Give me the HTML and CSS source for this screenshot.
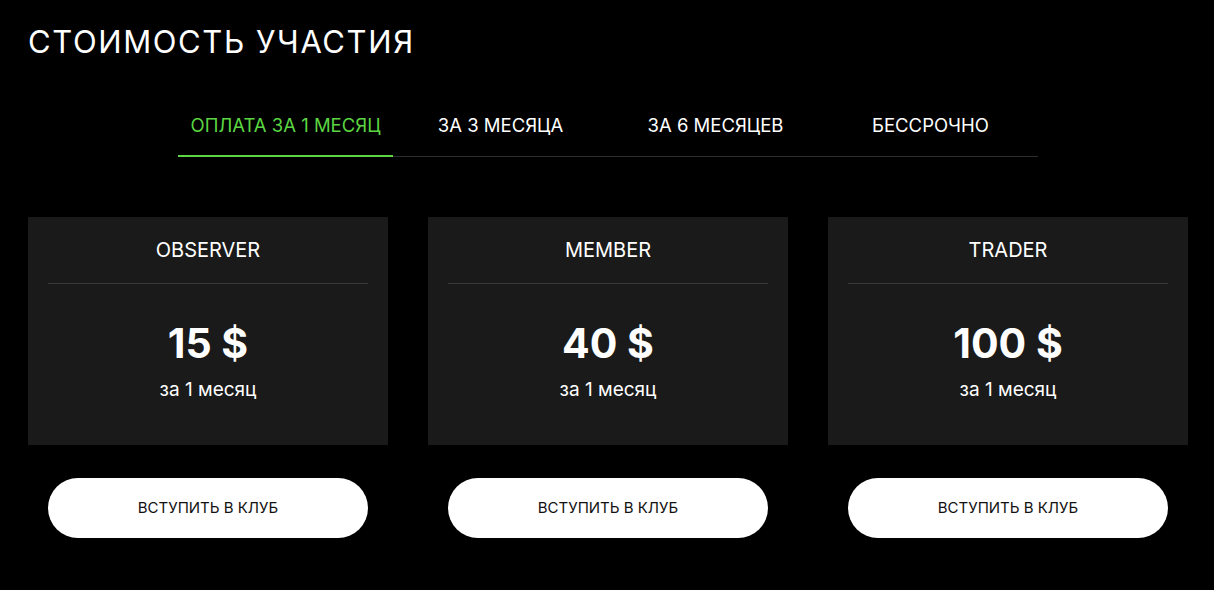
FILE: index.html
```html
<!DOCTYPE html>
<html lang="ru">
<head>
  <meta charset="UTF-8" />
  <meta name="viewport" content="width=device-width, initial-scale=1" />
  <title>Стоимость участия</title>
  <link rel="stylesheet" href="styles.css">
</head>
<body>

  <section class="pricing">
    <h1>Стоимость участия</h1>

    <div class="tabs">
      <div class="tab active">Оплата за 1 месяц</div>
      <div class="tab">За 3 месяца</div>
      <div class="tab">За 6 месяцев</div>
      <div class="tab">Бессрочно</div>
    </div>

    <div class="plans">
      <div class="plan">
        <div class="plan-card">
          <div class="plan-name">OBSERVER</div>
          <div class="plan-price">15 $</div>
          <div class="plan-period">за 1 месяц</div>
        </div>
        <a href="#" class="btn">Вступить в клуб</a>
      </div>
      <div class="plan">
        <div class="plan-card">
          <div class="plan-name">MEMBER</div>
          <div class="plan-price">40 $</div>
          <div class="plan-period">за 1 месяц</div>
        </div>
        <a href="#" class="btn">Вступить в клуб</a>
      </div>
      <div class="plan">
        <div class="plan-card">
          <div class="plan-name">TRADER</div>
          <div class="plan-price">100 $</div>
          <div class="plan-period">за 1 месяц</div>
        </div>
        <a href="#" class="btn">Вступить в клуб</a>
      </div>
    </div>
  </section>

</body>
</html>
```

FILE: styles.css
```css
body {
  margin: 0;
  background: #000;
  color: #fff;
  font-family: Inter, "Noto Sans", sans-serif;
}

.pricing {
  padding: 22px 26px 0 28px;
}

h1 {
  margin: 0;
  font-size: 31px;
  font-weight: 400;
  letter-spacing: 1.6px;
  text-transform: uppercase;
  line-height: 40px;
}

.tabs {
  display: grid;
  grid-template-columns: repeat(4, 215px);
  justify-content: center;
  margin-top: 43px;
}

.tab {
  text-align: center;
  font-size: 18.5px;
  text-transform: uppercase;
  line-height: 22px;
  padding: 9px 0 20px;
  border-bottom: 1px solid #2e2e2e;
}

.tab.active {
  color: #5bd642;
  border-bottom: 2px solid #5bd642;
  padding-bottom: 19px;
}

.plans {
  display: grid;
  grid-template-columns: repeat(3, 360px);
  gap: 40px;
  margin-top: 60px;
}

.plan {
  display: flex;
  flex-direction: column;
  gap: 33px;
}

.plan-card {
  background: #1a1a1a;
  padding: 21px 20px 43px;
  text-align: center;
}

.plan-name {
  font-size: 20px;
  line-height: 24px;
  padding-bottom: 21px;
  border-bottom: 1px solid #3a3a3a;
}

.plan-price {
  font-size: 41px;
  font-weight: 700;
  line-height: 48px;
  margin-top: 35px;
}

.plan-period {
  font-size: 19px;
  line-height: 24px;
  margin-top: 11px;
}

.btn {
  display: block;
  margin: 0 20px;
  height: 60px;
  line-height: 60px;
  border-radius: 30px;
  background: #fff;
  color: #111;
  text-align: center;
  text-decoration: none;
  text-transform: uppercase;
  font-size: 15px;
}
```
